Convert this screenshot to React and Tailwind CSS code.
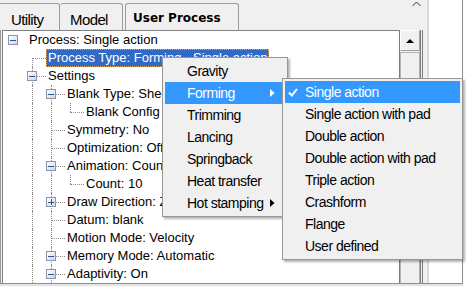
import React from 'react';

const rows = [
  { level: 0, text: 'Process: Single action', box: 'minus' },
  { level: 1, text: 'Process Type: Forming - Single action', selected: true, noTop: true },
  { level: 1, text: 'Settings', box: 'minus' },
  { level: 2, text: 'Blank Type: Sheet', box: 'minus' },
  { level: 3, text: 'Blank Config', last: true },
  { level: 2, text: 'Symmetry: No' },
  { level: 2, text: 'Optimization: Off' },
  { level: 2, text: 'Animation: Count', box: 'minus' },
  { level: 3, text: 'Count: 10', last: true },
  { level: 2, text: 'Draw Direction: Z', box: 'plus' },
  { level: 2, text: 'Datum: blank' },
  { level: 2, text: 'Motion Mode: Velocity' },
  { level: 2, text: 'Memory Mode: Automatic', box: 'minus' },
  { level: 2, text: 'Adaptivity: On', box: 'minus' },
];

const processItems = [
  { label: 'Gravity' },
  { label: 'Forming', active: true, sub: true },
  { label: 'Trimming' },
  { label: 'Lancing' },
  { label: 'Springback' },
  { label: 'Heat transfer' },
  { label: 'Hot stamping', sub: true },
];

const formingItems = [
  { label: 'Single action', active: true, checked: true },
  { label: 'Single action with pad' },
  { label: 'Double action' },
  { label: 'Double action with pad' },
  { label: 'Triple action' },
  { label: 'Crashform' },
  { label: 'Flange' },
  { label: 'User defined' },
];

function ExpandBox({ type }) {
  return (
    <span className="absolute left-[4px] top-[4px] flex h-[10px] w-[10px] items-center justify-center border border-[#8797ab] bg-gradient-to-br from-white to-[#d2d6dc]">
      <span className="h-px w-[6px] bg-[#2d4f9e]" />
      {type === 'plus' && <span className="absolute h-[6px] w-px bg-[#2d4f9e]" />}
    </span>
  );
}

function TreeRow({ row }) {
  const { level } = row;
  return (
    <div className="flex h-[18px] items-stretch pl-px">
      {Array.from({ length: level }).map((_, c) => (
        <span key={c} className="relative w-[19px] shrink-0">
          {c > 0 && <span className="absolute bottom-0 left-[9px] top-0 border-l border-dotted border-[#8c8c8c]" />}
        </span>
      ))}
      <span className="relative w-[23px] shrink-0">
        {level > 0 && (
          <>
            <span
              className={`absolute left-[9px] border-l border-dotted border-[#8c8c8c] ${row.noTop ? 'top-[9px]' : 'top-0'} ${row.last ? 'h-[9px]' : 'bottom-0'}`}
            />
            <span className="absolute left-[9px] right-0 top-[9px] border-t border-dotted border-[#8c8c8c]" />
          </>
        )}
        {row.box && <ExpandBox type={row.box} />}
      </span>
      <span
        className={`whitespace-nowrap px-[2px] text-[13px] leading-[18px] ${row.selected ? 'bg-[#316ac5] text-white outline outline-1 -outline-offset-1 outline-dotted outline-[#d9a860]' : ''}`}
      >
        {row.text}
      </span>
    </div>
  );
}

function SubArrow({ white }) {
  return (
    <svg className="absolute right-[10px] top-[7px] h-[8px] w-[5px]" viewBox="0 0 5 8">
      <polygon points="0,0 4.5,4 0,8" fill={white ? '#ffffff' : '#000000'} />
    </svg>
  );
}

export default function App() {
  return (
    <div className="relative h-[291px] w-[469px] overflow-hidden bg-white font-['Liberation_Sans',Arial,sans-serif] text-black">
      <div className="h-[284px] w-[463px] border-b border-r border-[#8e8e8e] shadow-[0_2px_1px_#e4e4e4]">
        <div className="flex h-full w-[429px] flex-col border-r-2 border-[#d9d9d9] bg-[#f0f0f0]">
          {/* tabs */}
          <div className="relative flex h-[30px] shrink-0 items-end">
            <div className="h-[27px] w-[60px] rounded-tr-[3px] border-r border-t border-[#9c9c9c] pl-[11px] pt-[7px] text-[15px] leading-[17px] tracking-[-0.6px]">
              Utility
            </div>
            <div className="h-[27px] w-[63px] rounded-t-[3px] border-r border-t border-[#9c9c9c] pl-[10px] pt-[7px] text-[15px] leading-[17px] tracking-[-0.6px]">
              Model
            </div>
            <div className="ml-[2px] h-[27px] w-[114px] rounded-t-[3px] border-l border-r border-t border-[#9c9c9c] pl-[7px] pt-[7px] font-['DejaVu_Sans',sans-serif] text-[12px] font-bold leading-[15px]">
              User Process
            </div>
            <svg className="absolute left-[412px] top-[1px] h-[6px] w-[9px]" viewBox="0 0 9 6">
              <polyline points="0.5,5 4.5,1 8.5,5" fill="none" stroke="#333" strokeWidth="1" />
            </svg>
          </div>
          {/* tree + scrollbar */}
          <div className="flex min-h-0 flex-1 border-l border-[#9a9a9a] pl-px">
            <div className="min-w-0 flex-1 overflow-hidden border-l border-t border-[#828282] bg-white">
              {rows.map((row, i) => (
                <TreeRow key={i} row={row} />
              ))}
            </div>
            <div className="flex w-[24px] shrink-0 border-l border-[#7c7c7c]">
              <div className="flex w-[20px] flex-col">
                <div className="flex h-[21px] items-center justify-center border border-b-[#a0a0a0] border-l-white border-r-[#a0a0a0] border-t-white bg-[#f0f0f0]">
                  <svg className="h-[4px] w-[8px]" viewBox="0 0 8 4">
                    <polygon points="0,4 4,0 8,4" fill="#000" />
                  </svg>
                </div>
                <div className="mt-px flex-1 border border-b-0 border-[#b4b4b4] bg-[#f0f0f0]" />
              </div>
              <div className="w-[3px] border-x border-[#7c7c7c]" />
            </div>
            <div className="w-[4px] shrink-0" />
          </div>
        </div>
      </div>

      {/* process type menu */}
      <div className="absolute left-[162px] top-[57px] w-[126px] border border-[#979797] bg-[#f0f0f0] p-[2px] text-[14px] tracking-[-0.5px] shadow-[2px_2px_2px_rgba(0,0,0,0.3)]">
        {processItems.map((it) => (
          <div
            key={it.label}
            className={`relative flex h-[22px] items-center whitespace-nowrap pl-[22px] ${it.active ? 'bg-[#3399ff] text-white' : ''}`}
          >
            {it.label}
            {it.sub && <SubArrow white={it.active} />}
          </div>
        ))}
      </div>

      {/* forming submenu */}
      <div className="absolute left-[282px] top-[78px] w-[181px] border border-[#979797] bg-[#f0f0f0] p-[2px] text-[14px] tracking-[-0.5px] shadow-[2px_2px_2px_rgba(0,0,0,0.3)]">
        {formingItems.map((it) => (
          <div
            key={it.label}
            className={`relative flex h-[22px] items-center whitespace-nowrap pl-[20px] ${it.active ? 'bg-[#3399ff] text-white' : ''}`}
          >
            {it.checked && (
              <svg className="absolute left-[3px] top-[7px] h-[9px] w-[10px]" viewBox="0 0 10 9">
                <polyline points="1,4.5 3.8,7.5 9,1" fill="none" stroke="#fff" strokeWidth="2" />
              </svg>
            )}
            {it.label}
          </div>
        ))}
      </div>
    </div>
  );
}
